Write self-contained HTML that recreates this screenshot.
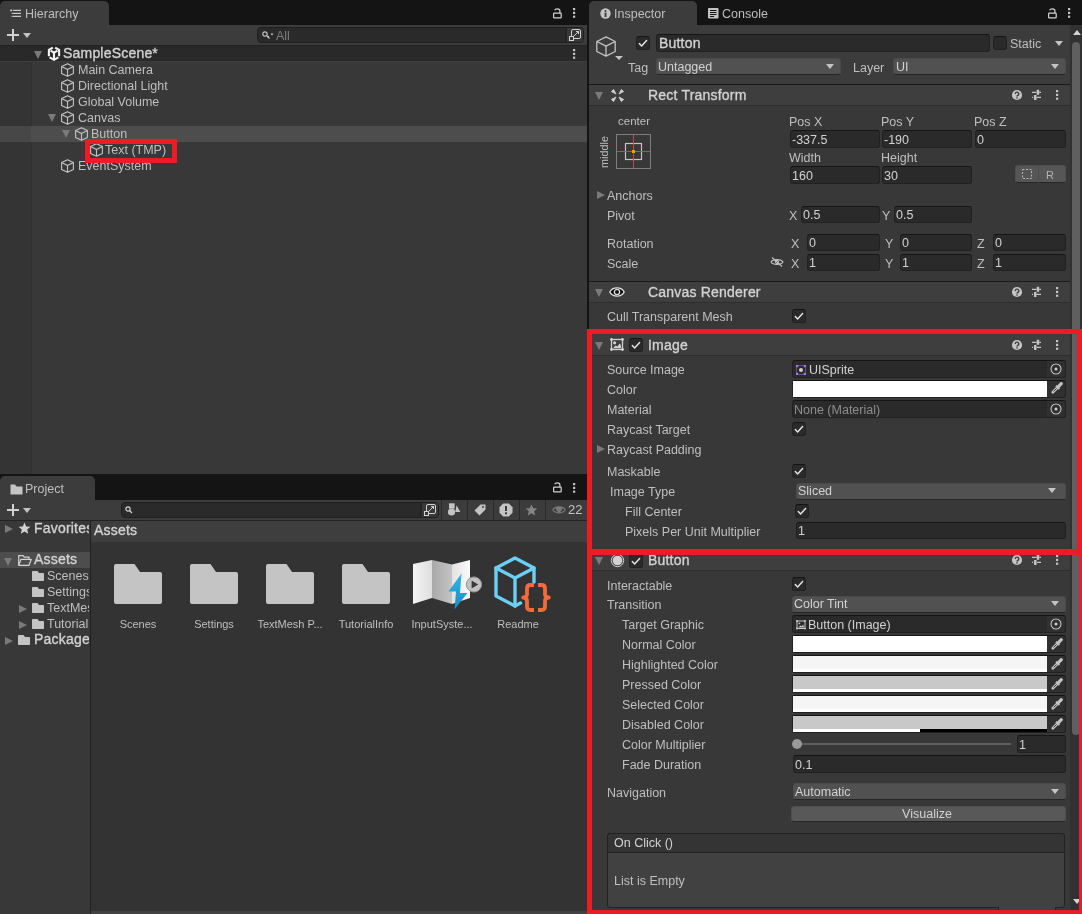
<!DOCTYPE html>
<html><head><meta charset="utf-8">
<style>
*{box-sizing:border-box;margin:0;padding:0}
html,body{width:1082px;height:914px;overflow:hidden;background:#141414;font-family:"Liberation Sans",sans-serif;font-size:12.5px;color:#bfbfbf}
.a{position:absolute}
.t{position:absolute;white-space:nowrap;line-height:16px;height:16px;margin-top:1px;margin-left:-1px}
.t.b{font-weight:normal;font-size:14px;color:#d2d2d2;-webkit-text-stroke:0.35px #d2d2d2;letter-spacing:0.2px;margin-top:0}
.w{color:#d2d2d2}
.fld{position:absolute;background:#2a2a2a;border:1px solid #212121;border-top-color:#151515;border-radius:3px;height:18px}
.dd{position:absolute;background:#515151;border:1px solid #4a4a4a;border-bottom-color:#262626;border-radius:3px;height:17px}
.btn{position:absolute;background:#585858;border:1px solid #4e4e4e;border-bottom-color:#262626;border-radius:3px}
.cb{position:absolute;width:14px;height:14px;background:#2a2a2a;border:1px solid #212121;border-top-color:#141414;border-radius:3px}
.tri{position:absolute;width:0;height:0;border-left:4.5px solid transparent;border-right:4.5px solid transparent;border-top:8px solid #7a7a7a}
.tril{position:absolute;width:0;height:0;border-top:4.5px solid transparent;border-bottom:4.5px solid transparent;border-left:8px solid #7a7a7a}
.ddarr{position:absolute;width:0;height:0;border-left:4.5px solid transparent;border-right:4.5px solid transparent;border-top:5.5px solid #c4c4c4}
.sep{position:absolute;background:#1a1a1a;height:1px}
.hdr{position:absolute;background:#3e3e3e}
.ft{position:absolute;white-space:nowrap;line-height:16px;color:#d2d2d2;margin-top:1px;margin-left:-1px}
.red{position:absolute;background:#ed1c24}
svg{position:absolute;overflow:visible}
</style></head><body><div id="root" style="position:absolute;left:0;top:0;width:1082px;height:914px;will-change:transform">
<svg width="0" height="0" style="left:0;top:0">
<defs>
<g id="cube"><path d="M6.5 0.7L12.4 3.6V10.4L6.5 13.3L0.6 10.4V3.6Z M0.6 3.6L6.5 6.6L12.4 3.6 M6.5 6.6V13.3" fill="none" stroke="#c4c4c4" stroke-width="1.1" stroke-linejoin="round"/></g>
<g id="kebab"><rect x="0" y="0" width="2.2" height="2.2" fill="#c4c4c4"/><rect x="0" y="3.8" width="2.2" height="2.2" fill="#c4c4c4"/><rect x="0" y="7.6" width="2.2" height="2.2" fill="#c4c4c4"/></g>
<g id="lock"><path d="M1.6 2.2C2.4 0.4 6.9 0.2 6.9 2.9V5.2" fill="none" stroke="#d2d2d2" stroke-width="1.2"/><rect x="0.6" y="5.2" width="7.6" height="4.6" rx="0.6" fill="none" stroke="#d2d2d2" stroke-width="1.2"/></g>
<g id="help"><circle cx="6" cy="6" r="5.1" fill="#c4c4c4"/><path d="M4.3 4.9a1.75 1.75 0 1 1 2.4 1.6c-.5.2-.7.5-.7 1" fill="none" stroke="#3e3e3e" stroke-width="1.4"/><rect x="5.3" y="8.2" width="1.4" height="1.4" fill="#3e3e3e"/></g>
<g id="preset"><path d="M1 3.4h4.6M8.2 3.4h1.8M1 8.4h1M5.6 8.4h4.4" stroke="#c4c4c4" stroke-width="1.1"/><rect x="5.7" y="0.8" width="2.5" height="5" fill="#c4c4c4"/><rect x="3" y="6" width="2.5" height="5" fill="#c4c4c4"/></g>
<g id="folder"><path d="M2 0H20.5L26 8H46a2 2 0 0 1 2 2V38a2 2 0 0 1-2 2H2a2 2 0 0 1-2-2V2a2 2 0 0 1 2-2Z" fill="#c4c4c4"/></g>
<g id="sfolder"><path d="M0.8 0H5.5L7 2H11.2a.8.8 0 0 1 .8.8V9.2a.8.8 0 0 1-.8.8H.8A.8.8 0 0 1 0 9.2V.8A.8.8 0 0 1 .8 0Z" fill="#c4c4c4"/></g>
<g id="target"><circle cx="6" cy="6" r="5" fill="none" stroke="#c4c4c4" stroke-width="1.1"/><circle cx="6" cy="6" r="1.6" fill="#c4c4c4"/></g>
<g id="pipette"><path d="M1.8 10.2L6.5 5.5" stroke="#c4c4c4" stroke-width="2.8" stroke-linecap="round"/><path d="M2.5 9.5L5.6 6.4" stroke="#303030" stroke-width="0.9"/><path d="M5 3.6L8.4 7" stroke="#c4c4c4" stroke-width="1.8"/><path d="M7.4 4.6L10.3 1.7" stroke="#c4c4c4" stroke-width="3.2" stroke-linecap="round"/></g>
<g id="check"><path d="M3.3 7.6L5.6 9.9L10.6 4.5" fill="none" stroke="#e6e6e6" stroke-width="1.45" stroke-linecap="round" stroke-linejoin="round"/></g>
</defs>
</svg>
<!-- ================= HIERARCHY ================= -->
<div class="a" style="left:0;top:0;width:587px;height:474px;background:#383838"></div>
<div class="a" style="left:0;top:0;width:587px;height:25px;background:#141414"></div>
<div class="a" style="left:0;top:1px;width:109px;height:24px;background:#3c3c3c;border-radius:5px 5px 0 0"></div>
<svg style="left:10px;top:9px" width="12" height="9"><path d="M3 1.4H11M3 4.4H11M3 7.4H11" stroke="#c4c4c4" stroke-width="1.1"/><path d="M0 1.4H2.4M1.2 0.2V2.6" stroke="#c4c4c4" stroke-width="0.9"/><rect x="1.6" y="3.8" width="1.2" height="1.2" fill="#c4c4c4"/><rect x="1.6" y="6.8" width="1.2" height="1.2" fill="#c4c4c4"/></svg>
<div class="t" style="left:26px;top:5px">Hierarchy</div>
<svg style="left:553px;top:8px" width="10" height="10"><use href="#lock"/></svg>
<svg style="left:573px;top:8px" width="3" height="10"><use href="#kebab"/></svg>
<div class="a" style="left:0;top:25px;width:587px;height:20px;background:#3c3c3c"></div>
<div class="a" style="left:7px;top:34px;width:12px;height:2px;background:#d2d2d2"></div>
<div class="a" style="left:12px;top:29px;width:2px;height:12px;background:#d2d2d2"></div>
<div class="ddarr" style="left:23px;top:33px;border-left-width:4px;border-right-width:4px;border-top-width:5px"></div>
<div class="a" style="left:257px;top:27px;width:327px;height:16px;background:#2a2a2a;border:1px solid #1f1f1f;border-radius:4px"></div>
<div class="a" style="left:565px;top:28px;width:2px;height:14px;background:#242424"></div>
<div class="a" style="left:567px;top:28px;width:16px;height:14px;background:#383838;border-radius:0 3px 3px 0"></div>
<svg style="left:262px;top:31px" width="12" height="9"><circle cx="3" cy="3" r="2.2" fill="none" stroke="#c4c4c4" stroke-width="1.2"/><path d="M4.6 4.6L7.5 7.5M5.5 6.5L6.8 5.2" stroke="#c4c4c4" stroke-width="1.2"/><path d="M8.5 2.5h3l-1.5 2z" fill="#c4c4c4"/></svg>
<div class="t" style="left:277px;top:27px;color:#7d7d7d">All</div>
<svg style="left:569px;top:29px" width="13" height="13"><rect x="2.5" y="0.5" width="9" height="9" rx="1.5" fill="#383838" stroke="#d2d2d2" stroke-width="1"/><path d="M4.5 7.5L9.5 2.5M7 2.5H9.5V5" fill="none" stroke="#d2d2d2" stroke-width="1"/><rect x="0.5" y="7.5" width="4" height="4" fill="#383838" stroke="#d2d2d2" stroke-width="1"/></svg>
<!-- scene header -->
<div class="a" style="left:0;top:45px;width:587px;height:16px;background:#292929"></div>
<div class="a" style="left:0;top:45px;width:587px;height:1px;background:#222"></div>
<div class="a" style="left:0;top:61px;width:587px;height:1px;background:#3d3d3d"></div>
<div class="tri" style="left:34px;top:51px"></div>
<svg style="left:47px;top:46px" width="14" height="15"><g fill="none" stroke="#f2f2f2" stroke-width="2.1" stroke-linejoin="miter" stroke-linecap="butt"><path d="M5.8 1.6L1.9 3.9V10.2"/><path d="M8.2 1.6L12.1 3.9V10.2"/><path d="M3.6 4.6L7 6.7L10.4 4.6M7 6.7V13.6"/><path d="M2.6 11.3L7 13.9L11.4 11.3"/></g></svg>
<div class="t b" style="left:64px;top:45px">SampleScene*</div>
<svg style="left:573px;top:48.5px" width="3" height="10"><use href="#kebab"/></svg>
<!-- gutter -->
<div class="a" style="left:0;top:62px;width:31px;height:412px;background:#343434"></div><div class="a" style="left:31px;top:62px;width:1px;height:412px;background:#303030"></div>
<!-- selected row -->
<div class="a" style="left:0;top:126px;width:587px;height:16px;background:#4d4d4d"></div>
<div class="a" style="left:0;top:126px;width:31px;height:16px;background:#474747"></div>
<svg style="left:61px;top:63px" width="14" height="14"><use href="#cube"/></svg>
<div class="t" style="left:79px;top:61px">Main Camera</div>
<svg style="left:61px;top:79px" width="14" height="14"><use href="#cube"/></svg>
<div class="t" style="left:79px;top:77px">Directional Light</div>
<svg style="left:61px;top:95px" width="14" height="14"><use href="#cube"/></svg>
<div class="t" style="left:79px;top:93px">Global Volume</div>
<div class="tri" style="left:48px;top:114px"></div>
<svg style="left:61px;top:111px" width="14" height="14"><use href="#cube"/></svg>
<div class="t" style="left:79px;top:109px">Canvas</div>
<div class="tri" style="left:62px;top:130px"></div>
<svg style="left:75px;top:127px" width="14" height="14"><use href="#cube"/></svg>
<div class="t" style="left:92px;top:125px">Button</div>
<svg style="left:90px;top:143px" width="14" height="14"><use href="#cube"/></svg>
<div class="t" style="left:106px;top:141px">Text (TMP)</div>
<svg style="left:61px;top:159px" width="14" height="14"><use href="#cube"/></svg>
<div class="t" style="left:79px;top:157px">EventSystem</div>
<div class="a" style="left:85px;top:139px;width:92px;height:24px;border:5px solid #ed1c24"></div>

<!-- ================= PROJECT ================= -->
<div class="a" style="left:0;top:474px;width:587px;height:26px;background:#141414"></div>
<div class="a" style="left:0;top:476px;width:95px;height:24px;background:#3c3c3c;border-radius:5px 5px 0 0"></div>
<svg style="left:10px;top:484px" width="13" height="11"><path d="M0.5 0.5H5L6.5 2.5H12.5V10.5H0.5Z" fill="#c4c4c4"/></svg>
<div class="t" style="left:26px;top:480px">Project</div>
<svg style="left:553px;top:482px" width="10" height="10"><use href="#lock"/></svg>
<svg style="left:573px;top:483px" width="3" height="10"><use href="#kebab"/></svg>
<div class="a" style="left:0;top:500px;width:587px;height:20px;background:#3c3c3c"></div>
<div class="a" style="left:7px;top:509px;width:12px;height:2px;background:#d2d2d2"></div>
<div class="a" style="left:12px;top:504px;width:2px;height:12px;background:#d2d2d2"></div>
<div class="ddarr" style="left:23px;top:508px;border-left-width:4px;border-right-width:4px;border-top-width:5px"></div>
<div class="a" style="left:121px;top:502px;width:318px;height:16px;background:#2a2a2a;border:1px solid #1f1f1f;border-radius:4px"></div>
<div class="a" style="left:420px;top:503px;width:2px;height:14px;background:#242424"></div>
<div class="a" style="left:422px;top:503px;width:16px;height:14px;background:#383838;border-radius:0 3px 3px 0"></div>
<svg style="left:125px;top:506px" width="8" height="8"><circle cx="3" cy="3" r="2.1" fill="none" stroke="#d2d2d2" stroke-width="1.2"/><path d="M4.5 4.5L7 7" stroke="#d2d2d2" stroke-width="1.3"/></svg>
<svg style="left:424px;top:504px" width="13" height="13"><rect x="2.5" y="0.5" width="9" height="9" rx="1.5" fill="#383838" stroke="#d2d2d2" stroke-width="1"/><path d="M4.5 7.5L9.5 2.5M7 2.5H9.5V5" fill="none" stroke="#d2d2d2" stroke-width="1"/><rect x="0.5" y="7.5" width="4" height="4" fill="#383838" stroke="#d2d2d2" stroke-width="1"/></svg>
<div class="a" style="left:441px;top:500px;width:1px;height:20px;background:#2a2a2a"></div>
<div class="a" style="left:467px;top:500px;width:1px;height:20px;background:#2a2a2a"></div>
<div class="a" style="left:493px;top:500px;width:1px;height:20px;background:#2a2a2a"></div>
<div class="a" style="left:519px;top:500px;width:1px;height:20px;background:#2a2a2a"></div>
<div class="a" style="left:545px;top:500px;width:1px;height:20px;background:#2a2a2a"></div>
<svg style="left:448px;top:503px" width="13" height="14"><rect x="1" y="0.3" width="5.6" height="5.4" fill="#c4c4c4"/><circle cx="3.5" cy="9" r="3.6" fill="#c4c4c4"/><path d="M8.6 2.3L12.3 9H7.2Z" fill="#c4c4c4"/></svg>
<svg style="left:474px;top:504px" width="12" height="12"><path d="M6.5 0.5H11.5V5.5L5.5 11.5L0.5 6.5Z" fill="#c4c4c4"/><circle cx="9" cy="3" r="1" fill="#3c3c3c"/></svg>
<svg style="left:499px;top:503px" width="14" height="14"><path d="M4.2 0.5H9.8L13.5 4.2V9.8L9.8 13.5H4.2L0.5 9.8V4.2Z" fill="#c4c4c4"/><rect x="6" y="3" width="2" height="5" fill="#3c3c3c"/><rect x="6" y="9.3" width="2" height="2" fill="#3c3c3c"/></svg>
<svg style="left:525px;top:504px" width="13" height="12"><path d="M6.5 0.5L8.2 4.3L12.3 4.6L9.2 7.3L10.1 11.4L6.5 9.2L2.9 11.4L3.8 7.3L0.7 4.6L4.8 4.3Z" fill="#858585"/></svg>
<svg style="left:552px;top:505px" width="14" height="10"><path d="M0.8 4.8C3.2 0.8 10.8 0.8 13.2 4.8C10.8 8.8 3.2 8.8 0.8 4.8Z" fill="none" stroke="#7a7a7a" stroke-width="1.2"/><path d="M3.9 2.4Q7 1 10.1 2.4Q10.2 6.6 7 7.2Q3.8 6.6 3.9 2.4Z" fill="#7a7a7a"/></svg>
<div class="t" style="left:569px;top:501px;font-size:13px;color:#c4c4c4">22</div>
<div class="a" style="left:0;top:520px;width:587px;height:1px;background:#222"></div>
<!-- tree -->
<div class="a" style="left:0;top:521px;width:90px;height:393px;background:#383838"></div>
<div class="a" style="left:90px;top:521px;width:1px;height:393px;background:#222"></div>
<div class="a" style="left:91px;top:521px;width:496px;height:21px;background:#3e3e3e"></div>
<div class="a" style="left:91px;top:542px;width:496px;height:372px;background:#333333"></div>
<div class="a" style="left:91px;top:911px;width:496px;height:3px;background:#424242"></div>
<div class="tril" style="left:5px;top:525px"></div>
<svg style="left:18px;top:522px" width="13" height="13"><path d="M6.5 0.6L8.2 4.5L12.4 4.8L9.2 7.6L10.2 11.8L6.5 9.5L2.8 11.8L3.8 7.6L0.6 4.8L4.8 4.5Z" fill="#d2d2d2"/></svg>
<div class="t b" style="left:35px;top:520px;width:55px;overflow:hidden">Favorites</div>
<div class="a" style="left:0;top:552px;width:90px;height:16px;background:#4d4d4d"></div>
<div class="tri" style="left:4px;top:558px"></div>
<svg style="left:18px;top:555px" width="14" height="11"><path d="M0.7 10.3V0.7H5L6.3 2.2H11V4" fill="none" stroke="#d2d2d2" stroke-width="1.2"/><path d="M0.7 10.3L3 4.3H13.3L11 10.3Z" fill="none" stroke="#d2d2d2" stroke-width="1.2" stroke-linejoin="round"/></svg>
<div class="t b" style="left:35px;top:551px">Assets</div>
<svg style="left:32px;top:571px" width="12" height="10"><use href="#sfolder"/></svg>
<div class="t" style="left:48px;top:567px;width:42px;overflow:hidden">Scenes</div>
<svg style="left:32px;top:587px" width="12" height="10"><use href="#sfolder"/></svg>
<div class="t" style="left:48px;top:583px;width:42px;overflow:hidden">Settings</div>
<div class="tril" style="left:19px;top:605px"></div>
<svg style="left:32px;top:603px" width="12" height="10"><use href="#sfolder"/></svg>
<div class="t" style="left:48px;top:599px;width:42px;overflow:hidden">TextMesh Pro</div>
<div class="tril" style="left:19px;top:621px"></div>
<svg style="left:32px;top:619px" width="12" height="10"><use href="#sfolder"/></svg>
<div class="t" style="left:48px;top:615px;width:42px;overflow:hidden">TutorialInfo</div>
<div class="tril" style="left:5px;top:637px"></div>
<svg style="left:18px;top:635px" width="12" height="10"><use href="#sfolder"/></svg>
<div class="t b" style="left:35px;top:631px;width:55px;overflow:hidden">Packages</div>
<!-- grid -->
<div class="t b" style="left:95px;top:522px">Assets</div>
<svg style="left:114px;top:564px" width="48" height="40"><use href="#folder"/></svg>
<svg style="left:190px;top:564px" width="48" height="40"><use href="#folder"/></svg>
<svg style="left:266px;top:564px" width="48" height="40"><use href="#folder"/></svg>
<svg style="left:342px;top:564px" width="48" height="40"><use href="#folder"/></svg>
<div class="t" style="left:98px;top:615px;width:80px;text-align:center;font-size:11px;margin-left:0">Scenes</div>
<div class="t" style="left:174px;top:615px;width:80px;text-align:center;font-size:11px;margin-left:0">Settings</div>
<div class="t" style="left:250px;top:615px;width:80px;text-align:center;font-size:11px;margin-left:0">TextMesh P...</div>
<div class="t" style="left:326px;top:615px;width:80px;text-align:center;font-size:11px;margin-left:0">TutorialInfo</div>
<div class="t" style="left:402px;top:615px;width:80px;text-align:center;font-size:11px;margin-left:0">InputSyste...</div>
<div class="t" style="left:478px;top:615px;width:80px;text-align:center;font-size:11px;margin-left:0">Readme</div>
<!-- input system icon -->
<svg style="left:413px;top:559px" width="70" height="52">
<defs><linearGradient id="mg1" x1="0" x2="1" y1="0" y2="0"><stop offset="0" stop-color="#f4f4f4"/><stop offset="1" stop-color="#dedede"/></linearGradient>
<linearGradient id="mg2" x1="0" x2="1" y1="0" y2="0"><stop offset="0" stop-color="#a9a9a9"/><stop offset="1" stop-color="#c4c4c4"/></linearGradient>
<linearGradient id="mg3" x1="0" x2="1" y1="0" y2="0"><stop offset="0" stop-color="#e2e2e2"/><stop offset="1" stop-color="#fafafa"/></linearGradient>
<linearGradient id="bolt" x1="0" x2="0" y1="0" y2="1"><stop offset="0" stop-color="#33b7e6"/><stop offset="1" stop-color="#168cc2"/></linearGradient></defs>
<path d="M0 5L19 1V39L0 45Z" fill="url(#mg1)"/>
<path d="M19 1L39 5.5V45L19 39Z" fill="url(#mg2)"/>
<path d="M39 5.5L57 1V39L39 45Z" fill="url(#mg3)"/>
<path d="M48.5 14.5L35.5 32.5H43L41.5 50.5L54.5 34H47Z" fill="url(#bolt)"/>
<circle cx="61" cy="25.5" r="7.6" fill="#c2c2c2" stroke="#8f8f8f" stroke-width="1"/>
<path d="M58.6 21.6L65.2 25.5L58.6 29.4Z" fill="#3a3a3a"/>
</svg>
<!-- readme icon -->
<svg style="left:493px;top:556px" width="60" height="58">
<g fill="none" stroke="#6ccff6" stroke-width="3.4" stroke-linejoin="round" stroke-linecap="round">
<path d="M3 12L22 2L41 12V26"/><path d="M3 12V40L22 50L27.5 47.1"/><path d="M3 12L22 22L41 12"/><path d="M22 22V50"/></g>
<g fill="none" stroke="#f26b3a" stroke-width="3.8" stroke-linejoin="round">
<path d="M41 29H37.5Q34 29 34 32.5V38Q34 41.5 30.2 41.5Q34 41.5 34 45V50.5Q34 54 37.5 54H41"/>
<path d="M45 29H48.5Q52 29 52 32.5V38Q52 41.5 55.8 41.5Q52 41.5 52 45V50.5Q52 54 48.5 54H45"/></g>
</svg>
<!-- ================= INSPECTOR ================= -->
<div class="a" style="left:589px;top:25px;width:493px;height:889px;background:#383838"></div>
<div class="a" style="left:589px;top:1px;width:108px;height:24px;background:#3c3c3c;border-radius:5px 5px 0 0"></div>
<svg style="left:600px;top:8px" width="11" height="11"><circle cx="5.5" cy="5.5" r="5.2" fill="#c4c4c4"/><rect x="4.6" y="4.5" width="1.9" height="4.5" fill="#3c3c3c"/><circle cx="5.5" cy="2.9" r="1" fill="#3c3c3c"/></svg>
<div class="t" style="left:615px;top:5px">Inspector</div>
<svg style="left:708px;top:8px" width="11" height="11"><rect x="0" y="0" width="10.5" height="10.5" rx="1" fill="#c4c4c4"/><path d="M2 2.5h6.5M2 4.5h6.5M2 6.5h6.5M2 8.5h4" stroke="#141414" stroke-width="1"/></svg>
<div class="t" style="left:723px;top:5px">Console</div>
<svg style="left:1048px;top:8px" width="10" height="10"><use href="#lock"/></svg>
<svg style="left:1068px;top:7.5px" width="3" height="10"><use href="#kebab"/></svg>
<!-- go header -->
<div class="a" style="left:589px;top:25px;width:481px;height:59px;background:#3c3c3c"></div>
<div class="sep" style="left:589px;top:84px;width:481px"></div>
<svg style="left:596px;top:36px" width="21" height="21"><path d="M10 0.9L19.2 5.5V15.5L10 20.1L0.8 15.5V5.5Z M0.8 5.5L10 10.1L19.2 5.5 M10 10.1V20.1" fill="none" stroke="#c4c4c4" stroke-width="1.3" stroke-linejoin="round"/></svg>
<div class="ddarr" style="left:615px;top:56px;border-left-width:4px;border-right-width:4px;border-top-width:4px"></div>
<div class="cb" style="left:636px;top:36px"><svg style="left:-1px;top:-1px" width="14" height="14"><use href="#check"/></svg></div>
<div class="fld" style="left:656px;top:34px;width:334px;height:18px"></div>
<div class="t b" style="left:660px;top:35px">Button</div>
<div class="cb" style="left:993px;top:36px"></div>
<div class="t" style="left:1011px;top:35px">Static</div>
<div class="ddarr" style="left:1055px;top:41px"></div>
<div class="t" style="left:629px;top:59px">Tag</div>
<div class="dd" style="left:656px;top:58px;width:185px;height:17px"></div>
<div class="t w" style="left:659px;top:58px">Untagged</div>
<div class="ddarr" style="left:826px;top:64px"></div>
<div class="t" style="left:854px;top:59px">Layer</div>
<div class="dd" style="left:893px;top:58px;width:173px;height:17px"></div>
<div class="t w" style="left:897px;top:58px">UI</div>
<div class="ddarr" style="left:1051px;top:64px"></div>
<!-- scrollbar -->
<div class="a" style="left:1070px;top:25px;width:12px;height:889px;background:#313131"></div>
<div class="ddarr" style="left:1073px;top:30px;border-top:0;border-bottom:5px solid #d2d2d2;border-left-width:4px;border-right-width:4px"></div>
<div class="a" style="left:1072px;top:42px;width:8px;height:693px;background:#5f5f5f;border-radius:4px"></div>
<div class="ddarr" style="left:1073px;top:899px;border-left-width:4px;border-right-width:4px;border-top-width:5px;border-top-color:#d2d2d2"></div>

<!-- Rect Transform -->
<div class="hdr" style="left:589px;top:85px;width:481px;height:20px"></div>
<div class="a" style="left:589px;top:105px;width:481px;height:1px;background:#2e2e2e"></div>
<div class="tri" style="left:595px;top:92px"></div>
<svg style="left:611px;top:89px" width="13" height="13"><g fill="#d2d2d2" stroke="#d2d2d2" stroke-width="0.8" stroke-linejoin="round"><path d="M0.4 2.6L2.6 0.4L5 5Z"/><path d="M12.6 2.6L10.4 0.4L8 5Z"/><path d="M0.4 10.4L2.6 12.6L5 8Z"/><path d="M12.6 10.4L10.4 12.6L8 8Z"/></g></svg>
<div class="t b" style="left:649px;top:87px">Rect Transform</div>
<svg style="left:1011px;top:89px" width="12" height="12"><use href="#help"/></svg>
<svg style="left:1031px;top:89px" width="12" height="12"><use href="#preset"/></svg>
<svg style="left:1056px;top:90px" width="3" height="10"><use href="#kebab"/></svg>

<div class="t" style="left:619px;top:112px;font-size:11.5px">center</div>
<div class="t" style="left:589px;top:143px;font-size:10.8px;transform:rotate(-90deg);transform-origin:16px 8px;width:32px;text-align:center">middle</div>
<svg style="left:616px;top:134px" width="36" height="36"><rect x="0.5" y="0.5" width="34" height="34" fill="none" stroke="#7d7d7d" stroke-width="1"/><path d="M17.5 1V34M1 17.5H34" stroke="#c44848" stroke-width="1"/><rect x="9.5" y="9.5" width="16" height="16" fill="none" stroke="#c4c4c4" stroke-width="1.2"/><path d="M17.5 9V26M9 17.5H26" stroke="#c44848" stroke-width="1"/><rect x="16" y="16" width="3" height="3" fill="#e8a800"/></svg>
<div class="t" style="left:790px;top:113px">Pos X</div>
<div class="t" style="left:882px;top:113px">Pos Y</div>
<div class="t" style="left:975px;top:113px">Pos Z</div>
<div class="fld" style="left:790px;top:130px;width:90px"></div>
<div class="fld" style="left:882px;top:130px;width:90px"></div>
<div class="fld" style="left:975px;top:130px;width:91px"></div>
<div class="ft" style="left:793px;top:131px">-337.5</div>
<div class="ft" style="left:885px;top:131px">-190</div>
<div class="ft" style="left:978px;top:131px">0</div>
<div class="t" style="left:790px;top:149px">Width</div>
<div class="t" style="left:882px;top:149px">Height</div>
<div class="fld" style="left:790px;top:166px;width:90px"></div>
<div class="fld" style="left:882px;top:166px;width:90px"></div>
<div class="ft" style="left:793px;top:167px">160</div>
<div class="ft" style="left:885px;top:167px">30</div>
<div class="btn" style="left:1015px;top:165px;width:24px;height:18px;background:#565656;border-radius:3px 0 0 3px"></div>
<div class="btn" style="left:1038px;top:165px;width:28px;height:18px;background:#565656;border-radius:0 3px 3px 0"></div>
<svg style="left:1021px;top:168px" width="12" height="12"><rect x="1.5" y="1.5" width="9" height="9" fill="none" stroke="#b4b4b4" stroke-width="1" stroke-dasharray="2 1.5"/></svg>
<div class="t" style="left:1047px;top:166px;font-size:11px;color:#b4b4b4">R</div>
<div class="tril" style="left:597px;top:191px"></div>
<div class="t" style="left:608px;top:187px">Anchors</div>
<div class="t" style="left:608px;top:207px">Pivot</div>
<div class="t" style="left:790px;top:207px">X</div>
<div class="fld" style="left:801px;top:206px;width:79px;height:17px"></div>
<div class="ft" style="left:804px;top:206px">0.5</div>
<div class="t" style="left:883px;top:207px">Y</div>
<div class="fld" style="left:894px;top:206px;width:78px;height:17px"></div>
<div class="ft" style="left:897px;top:206px">0.5</div>
<div class="t" style="left:608px;top:235px">Rotation</div>
<div class="t" style="left:792px;top:235px">X</div>
<div class="fld" style="left:807px;top:234px;width:73px;height:17px"></div>
<div class="ft" style="left:810px;top:234px">0</div>
<div class="t" style="left:886px;top:235px">Y</div>
<div class="fld" style="left:900px;top:234px;width:72px;height:17px"></div>
<div class="ft" style="left:903px;top:234px">0</div>
<div class="t" style="left:978px;top:235px">Z</div>
<div class="fld" style="left:993px;top:234px;width:73px;height:17px"></div>
<div class="ft" style="left:996px;top:234px">0</div>
<div class="t" style="left:608px;top:255px">Scale</div>
<svg style="left:770px;top:257px" width="14" height="10"><path d="M1 5C3 1.8 11 1.8 13 5C11 8.2 3 8.2 1 5Z" fill="none" stroke="#c4c4c4" stroke-width="1.1"/><circle cx="7" cy="5" r="1.6" fill="none" stroke="#c4c4c4" stroke-width="1"/><path d="M2 0.5L12 9.5" stroke="#c4c4c4" stroke-width="1.1"/></svg>
<div class="t" style="left:792px;top:255px">X</div>
<div class="fld" style="left:807px;top:254px;width:73px;height:17px"></div>
<div class="ft" style="left:810px;top:254px">1</div>
<div class="t" style="left:886px;top:255px">Y</div>
<div class="fld" style="left:900px;top:254px;width:72px;height:17px"></div>
<div class="ft" style="left:903px;top:254px">1</div>
<div class="t" style="left:978px;top:255px">Z</div>
<div class="fld" style="left:993px;top:254px;width:73px;height:17px"></div>
<div class="ft" style="left:996px;top:254px">1</div>
<div class="sep" style="left:589px;top:281px;width:481px"></div>
<!-- Canvas Renderer -->
<div class="hdr" style="left:589px;top:282px;width:481px;height:20px"></div>
<div class="a" style="left:589px;top:302px;width:481px;height:1px;background:#2e2e2e"></div>
<div class="tri" style="left:595px;top:289px"></div>
<svg style="left:609px;top:286px" width="17" height="13"><path d="M0.8 6C3.5 0.6 12.5 0.6 15.2 6C12.5 11.4 3.5 11.4 0.8 6Z" fill="#151515" stroke="#e0e0e0" stroke-width="1.3"/><circle cx="8" cy="6" r="2.6" fill="none" stroke="#e0e0e0" stroke-width="1.2"/></svg>
<div class="t b" style="left:649px;top:284px">Canvas Renderer</div>
<svg style="left:1011px;top:286px" width="12" height="12"><use href="#help"/></svg>
<svg style="left:1031px;top:286px" width="12" height="12"><use href="#preset"/></svg>
<svg style="left:1056px;top:287px" width="3" height="10"><use href="#kebab"/></svg>
<div class="t" style="left:608px;top:308px">Cull Transparent Mesh</div>
<div class="cb" style="left:792px;top:309px"><svg style="left:-1px;top:-1px" width="14" height="14"><use href="#check"/></svg></div>
<div class="sep" style="left:589px;top:329px;width:481px"></div>

<!-- Image -->
<div class="hdr" style="left:589px;top:330px;width:481px;height:25px"></div>
<div class="a" style="left:589px;top:355px;width:481px;height:1px;background:#2e2e2e"></div>
<div class="tri" style="left:595px;top:342px"></div>
<svg style="left:610px;top:338px" width="15" height="14"><rect x="1.5" y="1.5" width="11" height="10" fill="none" stroke="#d2d2d2" stroke-width="1.3"/><circle cx="1.5" cy="1.5" r="1.4" fill="#d2d2d2"/><circle cx="12.5" cy="1.5" r="1.4" fill="#d2d2d2"/><circle cx="1.5" cy="11.5" r="1.4" fill="#d2d2d2"/><circle cx="12.5" cy="11.5" r="1.4" fill="#d2d2d2"/><circle cx="4.6" cy="4.8" r="1.6" fill="#d2d2d2"/><path d="M3 10.2L5.6 7.4L7.4 8.6L9.6 5.6Q11.2 6.5 11.2 10.2Z" fill="#d2d2d2"/></svg>
<div class="cb" style="left:629px;top:338px"><svg style="left:-1px;top:-1px" width="14" height="14"><use href="#check"/></svg></div>
<div class="t b" style="left:649px;top:337px">Image</div>
<svg style="left:1011px;top:339px" width="12" height="12"><use href="#help"/></svg>
<svg style="left:1031px;top:339px" width="12" height="12"><use href="#preset"/></svg>
<svg style="left:1056px;top:340px" width="3" height="10"><use href="#kebab"/></svg>

<div class="t" style="left:608px;top:361px">Source Image</div>
<div class="fld" style="left:792px;top:360px;width:274px"></div>
<div class="a" style="left:1047px;top:361px;width:18px;height:16px;background:#303030;border-radius:0 3px 3px 0"></div>
<svg style="left:1050px;top:363px" width="12" height="12"><use href="#target"/></svg>
<svg style="left:796px;top:365px" width="10" height="10"><rect x="0.5" y="0.5" width="9" height="9" fill="none" stroke="#5c4d85" stroke-width="1"/><rect x="0" y="0" width="2.2" height="2.2" fill="#9d80e6"/><rect x="7.8" y="0" width="2.2" height="2.2" fill="#9d80e6"/><rect x="0" y="7.8" width="2.2" height="2.2" fill="#9d80e6"/><rect x="7.8" y="7.8" width="2.2" height="2.2" fill="#9d80e6"/><circle cx="5" cy="5" r="2" fill="#cfcfcf"/></svg>
<div class="ft" style="left:810px;top:361px">UISprite</div>

<div class="t" style="left:608px;top:381px">Color</div>
<div class="fld" style="left:792px;top:380px;width:274px"></div>
<div class="a" style="left:793px;top:381px;width:254px;height:16px;background:#ffffff"></div>
<div class="a" style="left:1047px;top:381px;width:18px;height:16px;background:#303030;border-radius:0 3px 3px 0"></div>
<svg style="left:1051px;top:382px" width="13" height="13"><use href="#pipette"/></svg>

<div class="t" style="left:608px;top:401px">Material</div>
<div class="fld" style="left:792px;top:400px;width:274px"></div>
<div class="a" style="left:1047px;top:401px;width:18px;height:16px;background:#303030;border-radius:0 3px 3px 0"></div>
<svg style="left:1050px;top:403px" width="12" height="12"><use href="#target"/></svg>
<div class="ft" style="left:795px;top:401px;color:#8c8c8c">None (Material)</div>

<div class="t" style="left:608px;top:421px">Raycast Target</div>
<div class="cb" style="left:792px;top:422px"><svg style="left:-1px;top:-1px" width="14" height="14"><use href="#check"/></svg></div>
<div class="tril" style="left:597px;top:445px"></div>
<div class="t" style="left:608px;top:441px">Raycast Padding</div>
<div class="t" style="left:608px;top:463px">Maskable</div>
<div class="cb" style="left:792px;top:464px"><svg style="left:-1px;top:-1px" width="14" height="14"><use href="#check"/></svg></div>
<div class="t" style="left:611px;top:483px">Image Type</div>
<div class="dd" style="left:796px;top:483px;width:270px;height:17px"></div>
<div class="t w" style="left:799px;top:482px">Sliced</div>
<div class="ddarr" style="left:1048px;top:488px"></div>
<div class="t" style="left:626px;top:503px">Fill Center</div>
<div class="cb" style="left:795px;top:504px"><svg style="left:-1px;top:-1px" width="14" height="14"><use href="#check"/></svg></div>
<div class="t" style="left:626px;top:523px">Pixels Per Unit Multiplier</div>
<div class="fld" style="left:796px;top:522px;width:270px;height:17px"></div>
<div class="ft" style="left:799px;top:522px">1</div>
<div class="sep" style="left:589px;top:549px;width:481px"></div>

<!-- Button -->
<div class="hdr" style="left:589px;top:550px;width:481px;height:20px"></div>
<div class="a" style="left:589px;top:570px;width:481px;height:1px;background:#2e2e2e"></div>
<div class="tri" style="left:595px;top:557px"></div>
<svg style="left:610px;top:553px" width="15" height="15"><circle cx="7.5" cy="7.5" r="6.2" fill="none" stroke="#d2d2d2" stroke-width="1"/><circle cx="7.5" cy="7.5" r="4.8" fill="#d2d2d2"/></svg>
<div class="cb" style="left:629px;top:554px"><svg style="left:-1px;top:-1px" width="14" height="14"><use href="#check"/></svg></div>
<div class="t b" style="left:649px;top:552px">Button</div>
<svg style="left:1011px;top:554px" width="12" height="12"><use href="#help"/></svg>
<svg style="left:1031px;top:554px" width="12" height="12"><use href="#preset"/></svg>
<svg style="left:1056px;top:555px" width="3" height="10"><use href="#kebab"/></svg>

<div class="t" style="left:608px;top:577px">Interactable</div>
<div class="cb" style="left:792px;top:577px"><svg style="left:-1px;top:-1px" width="14" height="14"><use href="#check"/></svg></div>
<div class="t" style="left:608px;top:596px">Transition</div>
<div class="dd" style="left:792px;top:596px;width:274px;height:17px"></div>
<div class="t w" style="left:795px;top:595px">Color Tint</div>
<div class="ddarr" style="left:1051px;top:601px"></div>
<div class="t" style="left:623px;top:616px">Target Graphic</div>
<div class="fld" style="left:792px;top:615px;width:274px;height:18px"></div>
<div class="a" style="left:1047px;top:616px;width:18px;height:16px;background:#303030;border-radius:0 3px 3px 0"></div>
<svg style="left:1050px;top:618px" width="12" height="12"><use href="#target"/></svg>
<svg style="left:796px;top:620px" width="10" height="10"><rect x="1" y="1" width="8" height="7.5" fill="none" stroke="#c8c8c8" stroke-width="1"/><circle cx="1" cy="1" r="1" fill="#c8c8c8"/><circle cx="9" cy="1" r="1" fill="#c8c8c8"/><circle cx="1" cy="8.5" r="1" fill="#c8c8c8"/><circle cx="9" cy="8.5" r="1" fill="#c8c8c8"/><circle cx="3.4" cy="3.4" r="0.9" fill="#c8c8c8"/><path d="M2.2 7.5L4.3 5.6L5.6 6.3L7.2 4.4L8 7.5Z" fill="#c8c8c8"/></svg>
<div class="ft" style="left:809px;top:616px">Button (Image)</div>
<div class="t" style="left:623px;top:636px">Normal Color</div>
<div class="t" style="left:623px;top:656px">Highlighted Color</div>
<div class="t" style="left:623px;top:676px">Pressed Color</div>
<div class="t" style="left:623px;top:696px">Selected Color</div>
<div class="t" style="left:623px;top:716px">Disabled Color</div>
<!-- swatches -->
<div class="fld" style="left:792px;top:635px;width:274px;height:18px"></div>
<div class="a" style="left:793px;top:636px;width:254px;height:16px;background:#ffffff"></div>
<div class="fld" style="left:792px;top:655px;width:274px;height:18px"></div>
<div class="a" style="left:793px;top:656px;width:254px;height:13px;background:#f5f5f5"></div>
<div class="a" style="left:793px;top:669px;width:254px;height:3px;background:#ffffff"></div>
<div class="fld" style="left:792px;top:675px;width:274px;height:18px"></div>
<div class="a" style="left:793px;top:676px;width:254px;height:13px;background:#c8c8c8"></div>
<div class="a" style="left:793px;top:689px;width:254px;height:3px;background:#ffffff"></div>
<div class="fld" style="left:792px;top:695px;width:274px;height:18px"></div>
<div class="a" style="left:793px;top:696px;width:254px;height:13px;background:#f5f5f5"></div>
<div class="a" style="left:793px;top:709px;width:254px;height:3px;background:#ffffff"></div>
<div class="fld" style="left:792px;top:715px;width:274px;height:18px"></div>
<div class="a" style="left:793px;top:716px;width:254px;height:13px;background:#c8c8c8"></div>
<div class="a" style="left:793px;top:729px;width:127px;height:3px;background:#ffffff"></div>
<div class="a" style="left:920px;top:729px;width:127px;height:3px;background:#000000"></div>
<div class="a" style="left:1047px;top:636px;width:18px;height:16px;background:#303030;border-radius:0 3px 3px 0"></div>
<div class="a" style="left:1047px;top:656px;width:18px;height:16px;background:#303030;border-radius:0 3px 3px 0"></div>
<div class="a" style="left:1047px;top:676px;width:18px;height:16px;background:#303030;border-radius:0 3px 3px 0"></div>
<div class="a" style="left:1047px;top:696px;width:18px;height:16px;background:#303030;border-radius:0 3px 3px 0"></div>
<div class="a" style="left:1047px;top:716px;width:18px;height:16px;background:#303030;border-radius:0 3px 3px 0"></div>
<svg style="left:1051px;top:638px" width="13" height="13"><use href="#pipette"/></svg>
<svg style="left:1051px;top:658px" width="13" height="13"><use href="#pipette"/></svg>
<svg style="left:1051px;top:678px" width="13" height="13"><use href="#pipette"/></svg>
<svg style="left:1051px;top:698px" width="13" height="13"><use href="#pipette"/></svg>
<svg style="left:1051px;top:718px" width="13" height="13"><use href="#pipette"/></svg>

<div class="t" style="left:623px;top:736px">Color Multiplier</div>
<div class="a" style="left:797px;top:743px;width:214px;height:2px;background:#5e5e5e"></div>
<div class="a" style="left:792px;top:739px;width:10px;height:10px;background:#999999;border-radius:50%"></div>
<div class="fld" style="left:1017px;top:735px;width:49px;height:18px"></div>
<div class="ft" style="left:1020px;top:736px">1</div>
<div class="t" style="left:623px;top:756px">Fade Duration</div>
<div class="fld" style="left:793px;top:755px;width:273px;height:18px"></div>
<div class="ft" style="left:796px;top:756px">0.1</div>

<div class="t" style="left:608px;top:784px">Navigation</div>
<div class="dd" style="left:793px;top:783px;width:273px;height:17px"></div>
<div class="t w" style="left:796px;top:783px">Automatic</div>
<div class="ddarr" style="left:1051px;top:789px"></div>
<div class="btn" style="left:791px;top:806px;width:275px;height:16px"></div>
<div class="t w" style="left:791px;top:805px;width:274px;text-align:center">Visualize</div>

<div class="a" style="left:607px;top:833px;width:458px;height:75px;background:#414141;border:1px solid #222;border-radius:3px"></div>
<div class="a" style="left:998px;top:907px;width:58px;height:5px;background:#414141;border-left:1px solid #222;border-right:1px solid #222"></div>
<div class="a" style="left:607px;top:833px;width:458px;height:20px;background:#343434;border:1px solid #222;border-radius:3px 3px 0 0"></div>
<div class="t w" style="left:615px;top:834px">On Click ()</div>
<div class="t" style="left:615px;top:872px">List is Empty</div>

<!-- red boxes -->
<div class="red" style="left:587px;top:329px;width:495px;height:5px"></div>
<div class="red" style="left:587px;top:329px;width:5px;height:585px"></div>
<div class="red" style="left:1077px;top:329px;width:5px;height:226px"></div>
<div class="red" style="left:587px;top:549px;width:495px;height:6px"></div>
<div class="red" style="left:1079px;top:549px;width:3px;height:365px"></div>
<div class="red" style="left:587px;top:910px;width:495px;height:4px"></div>
</div></body></html>
